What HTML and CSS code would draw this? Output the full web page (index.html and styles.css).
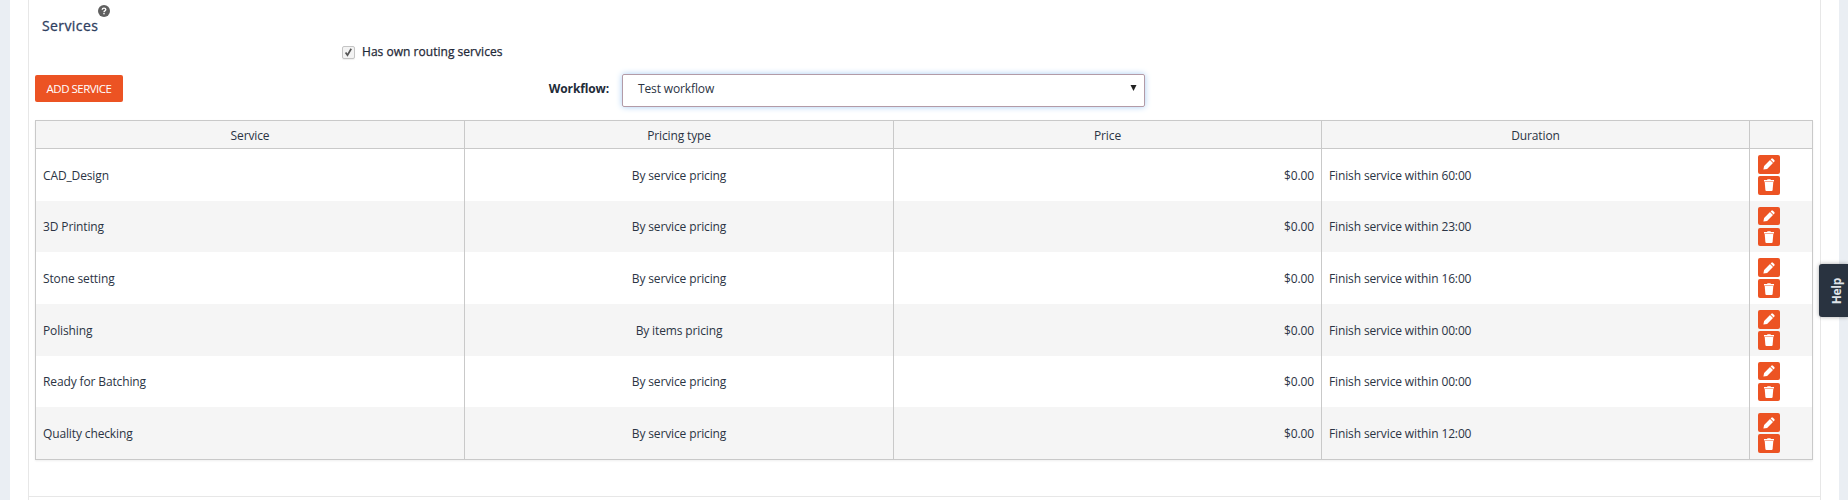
FILE: index.html
```html
<!DOCTYPE html>
<html lang="en">
<head>
<meta charset="utf-8">
<title>Services</title>
<link rel="stylesheet" href="styles.css">
</head>
<body>
<svg class="defs" width="0" height="0">
  <symbol id="pencil" viewBox="0 0 12 12"><path d="M.4 11.6l.7-3.7 5.9-5.9 3 3-5.9 5.9zM7.6 1.4l.7-.7q.8-.7 1.6 0l1.4 1.4q.7.8 0 1.6l-.7.7z"/></symbol>
  <symbol id="trash" viewBox="0 0 12 12"><path d="M1 1h3l.6-.8h2.8L8 1h3v1.5H1z"/><path d="M1.7 2.9h8.6l-.7 8.2q-.1.9-.9.9H3.3q-.8 0-.9-.9z"/></symbol>
</svg>
<div class="page">
  <main class="panel">
    <section class="card">
      <header class="title"><h2>Services</h2>
        <svg class="hint" viewBox="0 0 12 12"><circle cx="6" cy="6" r="6" fill="#606060"/><path d="M4.2 4.7Q4.3 3.1 6 3.1t1.8 1.5Q7.8 5.4 6.8 6 6 6.4 6 7.2" fill="none" stroke="#fff" stroke-width="1.4"/><rect x="5.3" y="8" width="1.4" height="1.3" fill="#fff"/></svg>
      </header>
      <label class="routing"><span class="check"><svg viewBox="0 0 11 11"><path d="M2.6 5.4l1.9 2.8L8.2 1.8" fill="none" stroke="#555" stroke-width="1.7"/></svg></span>Has own routing services</label>
      <div class="toolbar">
        <button class="add">ADD SERVICE</button>
        <span class="workflow">Workflow:</span>
        <div class="select"><span>Test workflow</span><svg class="arrow" viewBox="0 0 7 6"><path d="M.5 0h6L3.5 6z"/></svg></div>
      </div>
      <div class="table">
        <div class="row head"><div>Service</div><div>Pricing type</div><div>Price</div><div>Duration</div><div></div></div>
        <div class="row"><div>CAD_Design</div><div>By service pricing</div><div>$0.00</div><div>Finish service within 60:00</div><div class="actions"><button><svg><use href="#pencil"/></svg></button><button><svg><use href="#trash"/></svg></button></div></div>
        <div class="row"><div>3D Printing</div><div>By service pricing</div><div>$0.00</div><div>Finish service within 23:00</div><div class="actions"><button><svg><use href="#pencil"/></svg></button><button><svg><use href="#trash"/></svg></button></div></div>
        <div class="row"><div>Stone setting</div><div>By service pricing</div><div>$0.00</div><div>Finish service within 16:00</div><div class="actions"><button><svg><use href="#pencil"/></svg></button><button><svg><use href="#trash"/></svg></button></div></div>
        <div class="row"><div>Polishing</div><div>By items pricing</div><div>$0.00</div><div>Finish service within 00:00</div><div class="actions"><button><svg><use href="#pencil"/></svg></button><button><svg><use href="#trash"/></svg></button></div></div>
        <div class="row"><div>Ready for Batching</div><div>By service pricing</div><div>$0.00</div><div>Finish service within 00:00</div><div class="actions"><button><svg><use href="#pencil"/></svg></button><button><svg><use href="#trash"/></svg></button></div></div>
        <div class="row"><div>Quality checking</div><div>By service pricing</div><div>$0.00</div><div>Finish service within 12:00</div><div class="actions"><button><svg><use href="#pencil"/></svg></button><button><svg><use href="#trash"/></svg></button></div></div>
      </div>
    </section>
    <section class="next"></section>
  </main>
</div>
<div class="help"><span>Help</span></div>
</body>
</html>
```
FILE: styles.css
```css
* { box-sizing: border-box; }
body { margin: 0; font: 12px/18px "Open Sans", sans-serif; letter-spacing: -.13px; color: #2b3444; background: #eaeef3; overflow: hidden; }
button { font: inherit; border: 0; padding: 0; }
.defs { display: block; }
.page { height: 500px; padding: 0 9px 0 10px; }
.panel { height: 500px; background: #fff; padding: 0 18px; }
.card { height: 497px; border: 1px solid #e7e7e7; border-top: 0; padding: 0 7px 0 6px; }
.next { height: 3px; border: solid #e7e7e7; border-width: 0 1px; }
.title { display: flex; align-items: flex-start; height: 43px; padding: 5px 0 0 7px; }
.title h2 { width: 56px; margin: 11px 0 0; font-size: 14px; line-height: 20px; font-weight: 500; letter-spacing: .4px; color: #2f405f; -webkit-text-stroke: .3px #2f405f; }
.hint { width: 12px; height: 12px; }
.routing { display: flex; align-items: center; gap: 7px; height: 18px; padding-left: 307px; font-weight: 500; letter-spacing: .03px; color: #1f2938; -webkit-text-stroke: .25px #1f2938; }
.check { display: flex; width: 13px; height: 13px; border: 1px solid #c4c4c4; border-radius: 2px; background: #f3f3f3; box-shadow: 0 1px 1px #0001; }
.check svg { width: 11px; height: 11px; }
.toolbar { display: flex; align-items: flex-start; height: 59px; padding-top: 13px; }
.add { width: 88px; height: 27px; margin-top: 1px; border-radius: 2px; background: #ec5323; color: #fff; font-size: 11.5px; letter-spacing: -.5px; padding-top: 1px; }
.workflow { width: 499px; padding-right: 13px; margin-top: 6px; text-align: right; font-weight: 700; color: #222b38; }
.select { display: flex; justify-content: space-between; width: 523px; height: 33px; padding: 5px 7px 0 15px; border: 1px solid #b39ba7; border-radius: 2px; box-shadow: 0 0 6px #a9cdf3; }
.arrow { width: 7px; height: 6px; margin-top: 5px; fill: #222; }
.table { width: 1778px; height: 340px; border: 1px solid #c9c9c9; box-shadow: 0 1px 2px #0001; }
.row { display: grid; grid-template-columns: 429px 429px 428px 428px 1fr; height: 51.66px; }
.row.head { height: 28px; border-bottom: 1px solid #c9c9c9; }
.row > div { display: flex; align-items: center; padding: 2px 7px 0; border-right: 1px solid #c9c9c9; }
.row > div:last-child { border-right: 0; }
.row:nth-child(odd) { background: #f5f5f5; }
.row > div:nth-child(2), .row.head > div { justify-content: center; }
.row:not(.head) > div:nth-child(3) { justify-content: flex-end; }
.row > .actions { flex-direction: column; align-items: flex-start; gap: 2.5px; padding: 6px 0 0 8px; }
.actions button { display: flex; align-items: center; justify-content: center; width: 22px; height: 18.6px; border-radius: 2px; background: #ec5323; }
.actions svg { width: 12px; height: 12px; fill: #fff; }
.help { position: absolute; right: 0; top: 264px; width: 29px; height: 53px; display: flex; align-items: center; justify-content: center; padding: 1px 0 0 7px; border-radius: 3px 0 0 3px; background: #293340; color: #dfe3e8; box-shadow: 0 0 4px #0005; font-weight: 700; letter-spacing: -.3px; }
.help span { writing-mode: vertical-rl; transform: rotate(180deg); }
```
